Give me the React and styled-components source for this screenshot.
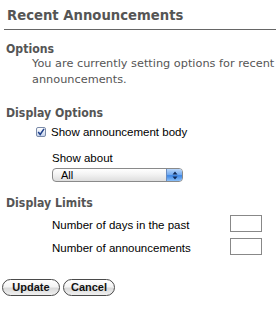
import React from "react";
import styled, { createGlobalStyle } from "styled-components";

const GlobalStyle = createGlobalStyle`
  html, body {
    margin: 0;
    padding: 0;
    background: #fff;
  }
`;

const Page = styled.div`
  width: 276px;
  height: 311px;
  overflow: hidden;
  padding-left: 4px;
  box-sizing: border-box;
  font-family: "DejaVu Sans", Verdana, sans-serif;
  color: #555;
`;

const Title = styled.h2`
  margin: 0;
  padding: 7px 0 6px 3px;
  font-family: "DejaVu Sans Condensed", "DejaVu Sans", sans-serif;
  font-stretch: condensed;
  font-size: 14.7px;
  font-weight: bold;
  line-height: 16px;
  border-bottom: 1px solid #666;
`;

const SectionHead = styled.h3`
  margin: ${(p) => p.$top || 0}px 0 0 2px;
  font-family: "DejaVu Sans Condensed", "DejaVu Sans", sans-serif;
  font-stretch: condensed;
  font-size: 12.2px;
  font-weight: bold;
  line-height: 16px;
`;

const Intro = styled.p`
  margin: -1px 0 0 28px;
  font-size: 11.3px;
  line-height: 16px;
  white-space: nowrap;
`;

const Field = styled.div`
  margin-left: ${(p) => p.$indent}px;
  margin-top: ${(p) => p.$top || 0}px;
  font-family: "Liberation Sans", Arial, sans-serif;
  font-size: 11.5px;
  color: #000;
`;

const CheckRow = styled.label`
  display: flex;
  align-items: center;
  gap: 5px;
  line-height: 16px;
`;

const Check = styled.span`
  width: 8px;
  height: 8px;
  border: 1px solid #7a8aa8;
  border-radius: 2px;
  background: linear-gradient(#ffffff, #c6d3ec);
  display: flex;
  align-items: center;
  justify-content: center;
`;

const Label = styled.div`
  line-height: 16px;
`;

const Select = styled.div`
  margin-top: 2px;
  width: 131px;
  height: 14px;
  box-sizing: border-box;
  border: 1px solid #8a8a8a;
  border-radius: 4px;
  background: linear-gradient(#ffffff 0%, #f3f3f3 45%, #dedede 100%);
  display: flex;
  align-items: center;
  justify-content: space-between;
  overflow: hidden;
  font-size: 11px;
  padding-left: 8px;
`;

const Stepper = styled.span`
  width: 15px;
  height: 100%;
  background: linear-gradient(#b8d6fa 0%, #6fa7ee 50%, #3c86e6 55%, #8cc0f8 100%);
  border-left: 1px solid #6a8cc0;
  display: flex;
  align-items: center;
  justify-content: center;
`;

const LimitGrid = styled.div`
  display: grid;
  grid-template-columns: 178px 32px;
  row-gap: 6px;
  align-items: center;
  margin: 4px 0 0 48px;
  font-family: "Liberation Sans", Arial, sans-serif;
  font-size: 11.5px;
  color: #000;

  span:nth-child(odd) {
    padding-top: 2px;
  }
`;

const Box = styled.span`
  width: 32px;
  height: 17px;
  box-sizing: border-box;
  border: 1px solid #888;
  background: #fff;
`;

const Buttons = styled.div`
  display: flex;
  gap: 3px;
  margin: 24px 0 0 -2px;
`;

const Button = styled.button`
  width: ${(p) => p.$w}px;
  height: 17px;
  padding: 0;
  border: 1px solid #4a4a4a;
  border-radius: 9px;
  background: linear-gradient(#ffffff 0%, #f4f4f4 45%, #dadada 55%, #f0f0f0 100%);
  font-family: "Liberation Sans", Arial, sans-serif;
  font-size: 11px;
  font-weight: bold;
  color: #111;
  line-height: 15px;
`;

export default function App() {
  return (
    <Page>
      <GlobalStyle />
      <Title>Recent Announcements</Title>
      <SectionHead $top={11}>Options</SectionHead>
      <Intro>
        You are currently setting options for recent
        <br />
        announcements.
      </Intro>
      <SectionHead $top={17}>Display Options</SectionHead>
      <Field $indent={32} $top={3}>
        <CheckRow>
          <Check>
            <svg width="8" height="8" viewBox="0 0 8 8">
              <path d="M1.2 4 L3.2 6.4 L7 0.8" fill="none" stroke="#1d3f8a" strokeWidth="1.5" />
            </svg>
          </Check>
          Show announcement body
        </CheckRow>
      </Field>
      <Field $indent={48} $top={10}>
        <Label>Show about</Label>
        <Select>
          All
          <Stepper>
            <svg width="6" height="9" viewBox="0 0 6 9">
              <path d="M3 0.5 L5.5 3.5 H0.5 Z M3 8.5 L5.5 5.5 H0.5 Z" fill="#102a58" />
            </svg>
          </Stepper>
        </Select>
      </Field>
      <SectionHead $top={13}>Display Limits</SectionHead>
      <LimitGrid>
        <span>Number of days in the past</span>
        <Box />
        <span>Number of announcements</span>
        <Box />
      </LimitGrid>
      <Buttons>
        <Button $w={58}>Update</Button>
        <Button $w={52}>Cancel</Button>
      </Buttons>
    </Page>
  );
}
